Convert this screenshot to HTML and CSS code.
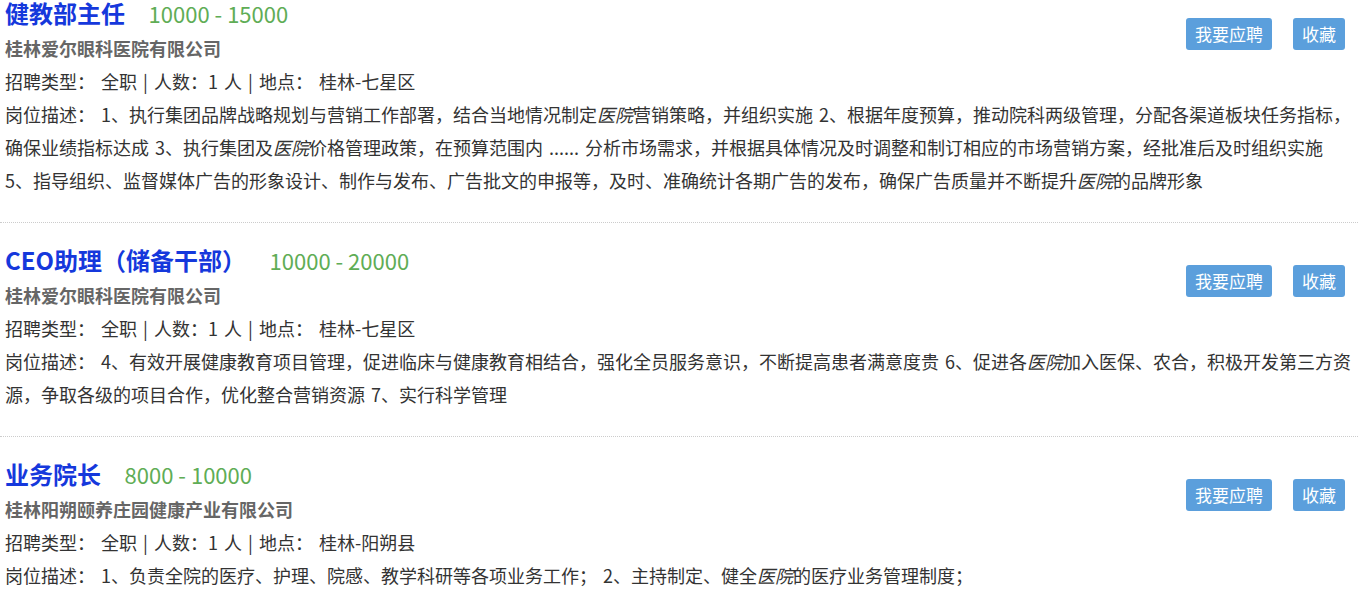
FILE: index.html
```html
<!DOCTYPE html>
<html lang="zh-CN">
<head>
    <meta charset="UTF-8">
    <meta name="viewport" content="width=device-width, initial-scale=1.0">
    <title>招聘职位</title>
    <link rel="stylesheet" href="styles.css">
</head>
<body>
    <ul class="job-list">
        <li class="job">
            <div class="job-actions">
                <a href="#" class="btn">我要应聘</a>
                <a href="#" class="btn">收藏</a>
            </div>
            <div class="job-head">
                <a href="#" class="job-title">健教部主任</a>
                <span class="salary">10000 - 15000</span>
            </div>
            <div class="company">桂林爱尔眼科医院有限公司</div>
            <div class="job-info">招聘类型： 全职 | 人数：1 人 | 地点： 桂林-七星区</div>
            <div class="job-desc">岗位描述： 1、执行集团品牌战略规划与营销工作部署，结合当地情况制定<em>医院</em>营销策略，并组织实施 2、根据年度预算，推动院科两级管理，分配各渠道板块任务指标，确保业绩指标达成 3、执行集团及<em>医院</em>价格管理政策，在预算范围内 ...... 分析市场需求，并根据具体情况及时调整和制订相应的市场营销方案，经批准后及时组织实施 5、指导组织、监督媒体广告的形象设计、制作与发布、广告批文的申报等，及时、准确统计各期广告的发布，确保广告质量并不断提升<em>医院</em>的品牌形象</div>
        </li>
        <li class="job">
            <div class="job-actions">
                <a href="#" class="btn">我要应聘</a>
                <a href="#" class="btn">收藏</a>
            </div>
            <div class="job-head">
                <a href="#" class="job-title">CEO助理（储备干部）</a>
                <span class="salary">10000 - 20000</span>
            </div>
            <div class="company">桂林爱尔眼科医院有限公司</div>
            <div class="job-info">招聘类型： 全职 | 人数：1 人 | 地点： 桂林-七星区</div>
            <div class="job-desc">岗位描述： 4、有效开展健康教育项目管理，促进临床与健康教育相结合，强化全员服务意识，不断提高患者满意度贵 6、促进各<em>医院</em>加入医保、农合，积极开发第三方资源，争取各级的项目合作，优化整合营销资源 7、实行科学管理</div>
        </li>
        <li class="job">
            <div class="job-actions">
                <a href="#" class="btn">我要应聘</a>
                <a href="#" class="btn">收藏</a>
            </div>
            <div class="job-head">
                <a href="#" class="job-title">业务院长</a>
                <span class="salary">8000 - 10000</span>
            </div>
            <div class="company">桂林阳朔颐养庄园健康产业有限公司</div>
            <div class="job-info">招聘类型： 全职 | 人数：1 人 | 地点： 桂林-阳朔县</div>
            <div class="job-desc">岗位描述： 1、负责全院的医疗、护理、院感、教学科研等各项业务工作； 2、主持制定、健全<em>医院</em>的医疗业务管理制度；</div>
        </li>
    </ul>
</body>
</html>
```

FILE: styles.css
```css
body {
    margin: 0;
    background: #fff;
    color: #333;
    font-family: "Noto Sans CJK SC", "Noto Sans", sans-serif;
    font-size: 18px;
}
.job-list {
    list-style: none;
    margin: 0;
    padding: 0;
}
.job {
    padding: 0 4px 25px 5px;
    margin-bottom: 24px;
    border-bottom: 1px dotted #ccc;
}
.job:last-child {
    border-bottom: none;
}
.job-actions {
    float: right;
    display: flex;
    gap: 21px;
    margin: 18px 9px 0 0;
}
.btn {
    display: block;
    height: 32px;
    line-height: 32px;
    padding: 0 9px;
    background: #5b9fdc;
    color: #fff;
    font-size: 17px;
    border-radius: 3px;
    text-decoration: none;
}
.btn:hover {
    background: #4a8cc8;
}
.job-head {
    line-height: 26px;
    font-size: 16px;
}
.job-title {
    color: #1538dc;
    font-size: 24px;
    font-weight: bold;
    text-decoration: none;
}
.salary {
    color: #5fad56;
    font-size: 22px;
    margin-left: 20px;
}
.company {
    margin-top: 3px;
    line-height: 33px;
    color: #666;
    font-weight: bold;
}
.job-info,
.job-desc {
    line-height: 33px;
    word-spacing: 2px;
}
.job-desc em {
    font-style: italic;
}
```
